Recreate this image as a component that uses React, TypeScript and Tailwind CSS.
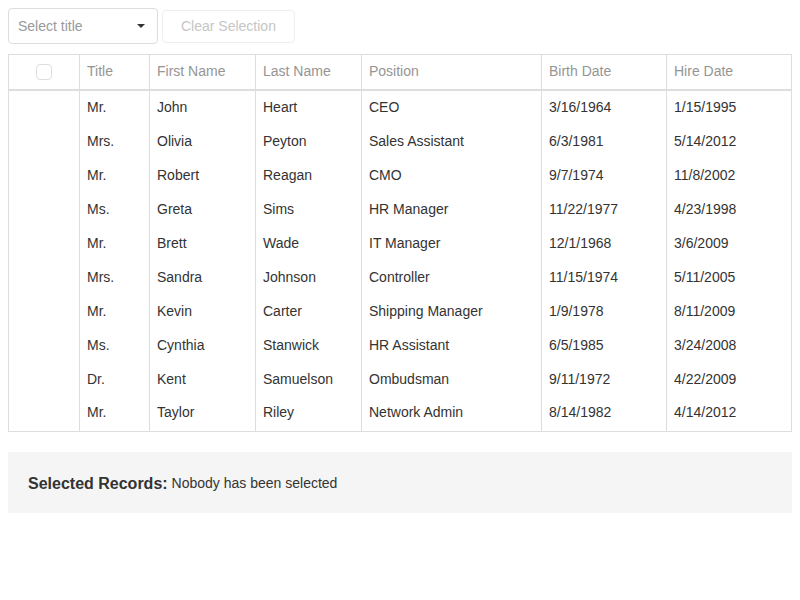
import React, { useState } from "react";

type Employee = {
  id: number;
  prefix: string;
  firstName: string;
  lastName: string;
  position: string;
  birthDate: string;
  hireDate: string;
};

const EMPLOYEES: Employee[] = [
  { id: 1, prefix: "Mr.", firstName: "John", lastName: "Heart", position: "CEO", birthDate: "3/16/1964", hireDate: "1/15/1995" },
  { id: 2, prefix: "Mrs.", firstName: "Olivia", lastName: "Peyton", position: "Sales Assistant", birthDate: "6/3/1981", hireDate: "5/14/2012" },
  { id: 3, prefix: "Mr.", firstName: "Robert", lastName: "Reagan", position: "CMO", birthDate: "9/7/1974", hireDate: "11/8/2002" },
  { id: 4, prefix: "Ms.", firstName: "Greta", lastName: "Sims", position: "HR Manager", birthDate: "11/22/1977", hireDate: "4/23/1998" },
  { id: 5, prefix: "Mr.", firstName: "Brett", lastName: "Wade", position: "IT Manager", birthDate: "12/1/1968", hireDate: "3/6/2009" },
  { id: 6, prefix: "Mrs.", firstName: "Sandra", lastName: "Johnson", position: "Controller", birthDate: "11/15/1974", hireDate: "5/11/2005" },
  { id: 7, prefix: "Mr.", firstName: "Kevin", lastName: "Carter", position: "Shipping Manager", birthDate: "1/9/1978", hireDate: "8/11/2009" },
  { id: 8, prefix: "Ms.", firstName: "Cynthia", lastName: "Stanwick", position: "HR Assistant", birthDate: "6/5/1985", hireDate: "3/24/2008" },
  { id: 9, prefix: "Dr.", firstName: "Kent", lastName: "Samuelson", position: "Ombudsman", birthDate: "9/11/1972", hireDate: "4/22/2009" },
  { id: 10, prefix: "Mr.", firstName: "Taylor", lastName: "Riley", position: "Network Admin", birthDate: "8/14/1982", hireDate: "4/14/2012" },
];

const COLUMNS = [
  { label: "Title", width: "w-[70px]" },
  { label: "First Name", width: "w-[106px]" },
  { label: "Last Name", width: "w-[106px]" },
  { label: "Position", width: "w-[180px]" },
  { label: "Birth Date", width: "w-[125px]" },
  { label: "Hire Date", width: "w-[125px]" },
];

export default function App() {
  const [selected] = useState<number[]>([]);

  return (
    <div className="p-2 font-['Liberation_Sans',Arial,sans-serif] text-[14px] text-[#333]">
      {/* toolbar */}
      <div className="flex items-center gap-1">
        <div className="flex h-9 w-[150px] items-center justify-between rounded border border-[#ddd] bg-white pl-[9px] pr-[12px]">
          <span className="text-[#999]">Select title</span>
          <span className="h-0 w-0 border-x-[4px] border-t-[4px] border-x-transparent border-t-[#333]" />
        </div>
        <button
          disabled
          className="h-[33px] rounded border border-[#eee] bg-white px-[18px] text-[#c6c6c6]"
        >
          Clear Selection
        </button>
      </div>

      {/* grid */}
      <table className="mt-[10px] w-full table-fixed border-collapse border border-[#ddd]">
        <thead>
          <tr className="border-b-2 border-[#ddd]">
            <th className="h-[35px] w-[71px] border-r border-[#ddd] p-0">
              <div className="mx-auto h-4 w-4 rounded-sm border border-[#ddd] bg-white" />
            </th>
            {COLUMNS.map((c) => (
              <th
                key={c.label}
                className={`${c.width} border-r border-[#ddd] px-[7px] py-0 text-left font-normal text-[#959595]`}
              >
                {c.label}
              </th>
            ))}
          </tr>
        </thead>
        <tbody>
          {EMPLOYEES.map((e, i) => (
            <tr
              key={e.id}
              className={`${i === EMPLOYEES.length - 1 ? "h-[36px] [&>td]:pb-[2px]" : "h-[34px]"} [&>td]:pt-[1px]`}
            >
              <td className="border-r border-[#ddd]" />
              <td className="border-r border-[#ddd] px-[7px]">{e.prefix}</td>
              <td className="border-r border-[#ddd] px-[7px]">{e.firstName}</td>
              <td className="border-r border-[#ddd] px-[7px]">{e.lastName}</td>
              <td className="border-r border-[#ddd] px-[7px]">{e.position}</td>
              <td className="border-r border-[#ddd] px-[7px]">{e.birthDate}</td>
              <td className="border-r border-[#ddd] px-[7px]">{e.hireDate}</td>
            </tr>
          ))}
        </tbody>
      </table>

      {/* selection summary */}
      <div className="mt-5 flex h-[61px] items-center bg-[#f5f5f5] px-5 pt-[2px]">
        <span className="text-[16px] font-bold">Selected Records:</span>
        <span className="ml-1">
          {selected.length ? `${selected.length} selected` : "Nobody has been selected"}
        </span>
      </div>
    </div>
  );
}
